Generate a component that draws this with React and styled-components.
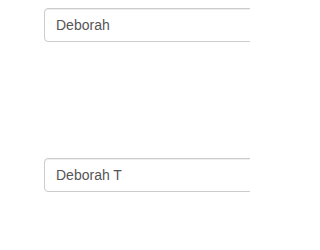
import React from "react";
import styled, { createGlobalStyle } from "styled-components";

const Global = createGlobalStyle`
  html, body { margin: 0; padding: 0; background: #fff; overflow: hidden; }
  body { font-family: "Liberation Sans", Arial, sans-serif; }
`;

const Page = styled.div`
  display: flex;
  flex-direction: column;
  gap: 116px;
  box-sizing: border-box;
  width: 250px;
  height: 250px;
  padding: 8px 0 0 44px;
  overflow: hidden;
`;

const Input = styled.input`
  display: block;
  flex: none;
  box-sizing: border-box;
  width: 240px;
  height: 34px;
  padding: 6px 11px;
  font-family: "Liberation Sans", Arial, sans-serif;
  font-size: 14px;
  line-height: 1.42857;
  color: #555;
  background: #fff;
  border: 1px solid #ccc;
  border-radius: 4px;
  box-shadow: inset 0 1px 1px rgba(0, 0, 0, 0.075);
  outline: none;
`;

export default function App() {
  return (
    <>
      <Global />
      <Page>
        <Input type="text" defaultValue="Deborah" />
        <Input type="text" defaultValue="Deborah T" />
      </Page>
    </>
  );
}
